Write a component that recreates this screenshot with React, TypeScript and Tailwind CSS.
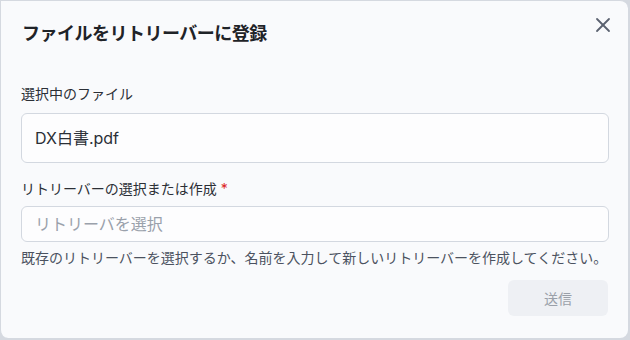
import { X } from 'lucide-react';

const font = { fontFamily: 'Inter, "Noto Sans CJK JP", sans-serif' };

export default function App() {
  return (
    <div className="w-[630px] h-[340px] bg-[#d5d9e0]" style={font}>
      <div className="w-[628px] h-[338px] bg-[#f9fafc] border-t border-l border-[#d5d9e0] rounded-tr-lg rounded-b-lg flex flex-col">
        <div className="flex items-start justify-between pl-[21px] pr-[13px] pt-[19px]">
          <h2 className="text-[18px] leading-[28px] font-bold tracking-[-0.5px] text-[#1f2328]">ファイルをリトリーバーに登録</h2>
          <button className="-mt-[7px] text-[#5b6270]">
            <X size={24} strokeWidth={1.8} />
          </button>
        </div>

        <div className="px-[20px] pt-[36px] flex flex-col">
          <label className="text-[14px] leading-[20px] text-[#2b2f36]">選択中のファイル</label>
          <div className="mt-[9px] h-[50px] w-[588px] rounded-md border border-[#d3d8e0] bg-[#fdfdfe] flex items-center px-[13px] text-[16px] text-[#2b2f36]">
            DX白書.pdf
          </div>

          <label className="mt-[16px] text-[14px] leading-[20px] text-[#2b2f36]">
            リトリーバーの選択または作成 <span className="text-[#dc2626]">*</span>
          </label>
          <div className="mt-[7px] h-[36px] w-[588px] rounded-md border border-[#d3d8e0] bg-[#fdfdfe] flex items-center px-[13px] text-[16px] text-[#9aa1ab]">
            リトリーバを選択
          </div>
          <p className="mt-[6px] text-[14px] leading-[20px] text-[#4b5260] whitespace-nowrap">
            既存のリトリーバーを選択するか、名前を入力して新しいリトリーバーを作成してください。
          </p>

          <div className="flex justify-end mt-[12px]">
            <button className="w-[100px] h-[36px] rounded-md bg-[#eef0f4] text-[14px] text-[#9aa0a9]">送信</button>
          </div>
        </div>
      </div>
    </div>
  );
}
